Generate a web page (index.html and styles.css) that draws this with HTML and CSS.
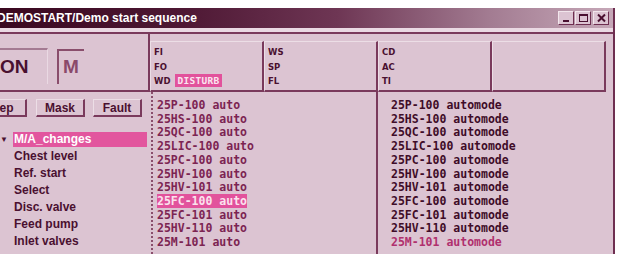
FILE: index.html
```html
<!DOCTYPE html>
<html lang="en">
<head>
    <meta charset="UTF-8">
    <title>DEMOSTART/Demo start sequence</title>
    <link rel="stylesheet" href="styles.css">
</head>
<body>
    <div class="window">
        <div class="titlebar">
            <span class="title">DEMOSTART/Demo start sequence</span>
            <div class="winbtns">
                <span class="winbtn">
                    <svg width="11" height="10" viewBox="0 0 11 10"><rect x="2" y="7" width="6" height="2" fill="#4a1030"/></svg>
                </span>
                <span class="winbtn">
                    <svg width="11" height="10" viewBox="0 0 11 10"><rect x="1.5" y="1.5" width="8" height="7" fill="none" stroke="#4a1030" stroke-width="1"/><rect x="1" y="1" width="9" height="2" fill="#4a1030"/></svg>
                </span>
                <span class="winbtn close">
                    <svg width="11" height="10" viewBox="0 0 11 10"><path d="M2 1.5 L9 8.5 M9 1.5 L2 8.5" stroke="#4a1030" stroke-width="2"/></svg>
                </span>
            </div>
        </div>
        <div class="strip"></div>

        <div class="header">
            <div class="modebox">
                <div class="onbox">ON</div>
                <div class="mbox">M</div>
            </div>
            <div class="hcol">
                <div>FI</div>
                <div>FO</div>
                <div>WD <span class="disturb">DISTURB</span></div>
            </div>
            <div class="hcol">
                <div>WS</div>
                <div>SP</div>
                <div>FL</div>
            </div>
            <div class="hcol">
                <div>CD</div>
                <div>AC</div>
                <div>TI</div>
            </div>
            <div class="hcol"></div>
        </div>

        <div class="main">
            <div class="left">
                <div class="btnrow">
                    <button class="btn step">Step</button>
                    <button class="btn">Mask</button>
                    <button class="btn">Fault</button>
                </div>
                <ul class="steps">
                    <li class="current"><span class="marker">&#9660;</span><span class="label">M/A_changes</span></li>
                    <li><span class="marker"></span><span class="label">Chest level</span></li>
                    <li><span class="marker"></span><span class="label">Ref. start</span></li>
                    <li><span class="marker"></span><span class="label">Select</span></li>
                    <li><span class="marker"></span><span class="label">Disc. valve</span></li>
                    <li><span class="marker"></span><span class="label">Feed pump</span></li>
                    <li><span class="marker"></span><span class="label">Inlet valves</span></li>
                </ul>
            </div>

            <div class="list mid">
                <div>25P-100 auto</div>
                <div>25HS-100 auto</div>
                <div>25QC-100 auto</div>
                <div>25LIC-100 auto</div>
                <div>25PC-100 auto</div>
                <div>25HV-100 auto</div>
                <div>25HV-101 auto</div>
                <div><span class="sel">25FC-100 auto</span></div>
                <div>25FC-101 auto</div>
                <div>25HV-110 auto</div>
                <div>25M-101 auto</div>
            </div>

            <div class="list right">
                <div>25P-100 automode</div>
                <div>25HS-100 automode</div>
                <div>25QC-100 automode</div>
                <div>25LIC-100 automode</div>
                <div>25PC-100 automode</div>
                <div>25HV-100 automode</div>
                <div>25HV-101 automode</div>
                <div>25FC-100 automode</div>
                <div>25FC-101 automode</div>
                <div>25HV-110 automode</div>
                <div class="pending">25M-101 automode</div>
            </div>
        </div>
    </div>
</body>
</html>
```

FILE: styles.css
```css
* {
    box-sizing: border-box;
    margin: 0;
    padding: 0;
}

body {
    background: #fff;
    font-family: "Liberation Sans", Arial, sans-serif;
    color: #4a1030;
}

.window {
    margin-top: 8px;
    width: 615px;
    height: 246px;
    background: #dcc4d2;
    border-right: 2px solid #6e2e50;
    overflow: hidden;
}

/* title bar */
.titlebar {
    height: 20px;
    display: flex;
    align-items: center;
    justify-content: space-between;
    padding-right: 4px;
    background: linear-gradient(to right, #3a0820 0%, #4e1834 30%, #6e3654 55%, #a37c92 80%, #c6a8b8 100%);
}

.title {
    margin-left: -3px;
    color: #fff;
    font-weight: bold;
    font-size: 12px;
}

.winbtns {
    display: flex;
    gap: 1px;
}

.winbtn {
    width: 16px;
    height: 14px;
    display: flex;
    align-items: center;
    justify-content: center;
    background: #dcc4d2;
    border: 1px solid;
    border-color: #f2e6ec #6e2e50 #6e2e50 #f2e6ec;
}

.winbtn.close {
    margin-left: 1px;
}

.strip {
    height: 6px;
    background: #ead9e3;
    border-bottom: 2px solid #7a3a5c;
}

/* header row */
.header {
    display: flex;
    height: 58px;
}

.modebox {
    width: 150px;
    height: 58px;
    display: flex;
    align-items: flex-start;
    gap: 9px;
    padding-top: 14px;
    border-right: 2px solid #7a3a5c;
    border-bottom: 2px solid #7a3a5c;
}

.onbox {
    width: 48px;
    height: 36px;
    border-top: 2px solid #a47a92;
    border-right: 1px solid #ead9e3;
    font-weight: bold;
    font-size: 19px;
    line-height: 34px;
    color: #4a1030;
}

.mbox {
    width: 27px;
    height: 35px;
    margin-top: 1px;
    border-left: 2px solid #8a4e6c;
    border-top: 2px solid #8a4e6c;
    padding-left: 4px;
    font-weight: bold;
    font-size: 19px;
    line-height: 32px;
    color: #8a4a6a;
}

.hcol {
    width: 114px;
    height: 51px;
    margin-top: 7px;
    padding: 3px 0 0 3px;
    border-style: solid;
    border-width: 1px 2px 2px 1px;
    border-color: #ecdee6 #7a3a5c #7a3a5c #ecdee6;
    font-family: "DejaVu Sans", sans-serif;
    font-weight: bold;
    font-size: 8.5px;
    line-height: 14.5px;
    color: #4a1030;
}

.disturb {
    margin-left: 2px;
    padding: 1px 2px;
    background: #e2529c;
    color: #fbe6f0;
    font-family: "DejaVu Sans Mono", monospace;
    font-size: 9.5px;
    letter-spacing: 0.3px;
}

/* lower part */
.main {
    display: flex;
    height: 162px;
}

.left {
    width: 153px;
    border-right: 2px dotted #8a4e6c;
}

.btnrow {
    display: flex;
    gap: 8px;
    padding-top: 7px;
    margin-left: -25px;
}

.btn {
    width: 49px;
    height: 18px;
    background: #dcc4d2;
    border-style: solid;
    border-width: 1px 2px 2px 1px;
    border-color: #ecdee6 #7a3a5c #7a3a5c #ecdee6;
    font-family: "Liberation Sans", Arial, sans-serif;
    font-weight: bold;
    font-size: 12px;
    color: #4a1030;
}

.btn.step {
    width: 52px;
    margin-right: 1px;
}

.steps {
    list-style: none;
    margin-top: 14px;
}

.steps li {
    display: flex;
    align-items: center;
    height: 17px;
}

.marker {
    width: 13px;
    font-size: 8px;
    line-height: 15px;
    color: #4a1030;
}

.label {
    width: 134px;
    height: 15px;
    padding-left: 1px;
    font-weight: bold;
    font-size: 12px;
    line-height: 15px;
    color: #4a1030;
}

.current .label {
    background: #e2569e;
    color: #fff;
}

.list {
    font-family: "DejaVu Sans Mono", monospace;
    font-weight: bold;
    font-size: 11.5px;
    line-height: 13.7px;
    white-space: nowrap;
}

.mid {
    width: 225px;
    padding: 7px 0 0 4px;
    border-right: 2px solid #7a3a5c;
    color: #7c2452;
}

.sel {
    background: #e2529c;
    color: #fbe2ee;
}

.right {
    flex: 1;
    padding: 7px 0 0 13px;
    color: #3f0c28;
}

.right .pending {
    color: #b0306e;
}
```
